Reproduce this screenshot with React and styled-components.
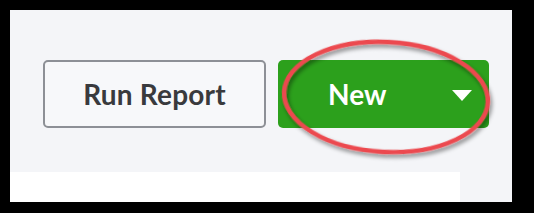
import React from "react";
import styled, { createGlobalStyle } from "styled-components";

const Global = createGlobalStyle`
  html, body { margin: 0; padding: 0; background: #000; }
  body { font-family: Lato, "Noto Sans", sans-serif; }
`;

const Frame = styled.div`
  width: 534px;
  height: 213px;
  box-sizing: border-box;
  padding: 10px 22px 11px 10px;
  background: #000;
`;

const Surface = styled.div`
  position: relative;
  height: 100%;
  background: #f4f5f8;
  display: flex;
  flex-direction: column;
`;

const Toolbar = styled.div`
  display: flex;
  gap: 12px;
  padding: 50px 0 0 33px;
`;

const Button = styled.button`
  box-sizing: border-box;
  height: 68px;
  border-radius: 5px;
  font-family: Lato, "Noto Sans", sans-serif;
  font-weight: 700;
  font-size: 28px;
  display: flex;
  align-items: center;
  cursor: pointer;
`;

const OutlineButton = styled(Button)`
  width: 223px;
  background: #f7f8fa;
  border: 2px solid #8d9096;
  color: #393a3d;
  justify-content: center;
  letter-spacing: 0.2px;
`;

const PrimaryButton = styled(Button)`
  width: 211px;
  background: #2ca01c;
  border: none;
  color: #fff;
  padding: 0 17px 0 50px;
  justify-content: space-between;
`;

const Caret = styled.span`
  width: 0;
  height: 0;
  border-left: 10px solid transparent;
  border-right: 10px solid transparent;
  border-top: 11px solid #fff;
  margin-top: 2px;
`;

const Panel = styled.div`
  margin-top: auto;
  width: 450px;
  height: 30px;
  background: #fff;
`;

const Highlight = styled.svg`
  position: absolute;
  left: 250px;
  top: 10px;
  width: 250px;
  height: 160px;
  overflow: visible;
  pointer-events: none;
`;

export default function App() {
  return (
    <>
      <Global />
      <Frame>
        <Surface>
          <Toolbar>
            <OutlineButton>Run Report</OutlineButton>
            <PrimaryButton>
              <span>New</span>
              <Caret />
            </PrimaryButton>
          </Toolbar>
          <Panel />
          <Highlight viewBox="260 20 250 160">
            <defs>
              <filter id="sh" x="-20%" y="-20%" width="140%" height="150%">
                <feDropShadow dx="2" dy="3" stdDeviation="2" floodColor="#000" floodOpacity="0.45" />
              </filter>
            </defs>
            <ellipse
              cx="386"
              cy="97"
              rx="102"
              ry="55"
              fill="none"
              stroke="#ec4a4f"
              strokeWidth="4.5"
              transform="rotate(3 386 97)"
              filter="url(#sh)"
            />
          </Highlight>
        </Surface>
      </Frame>
    </>
  );
}
